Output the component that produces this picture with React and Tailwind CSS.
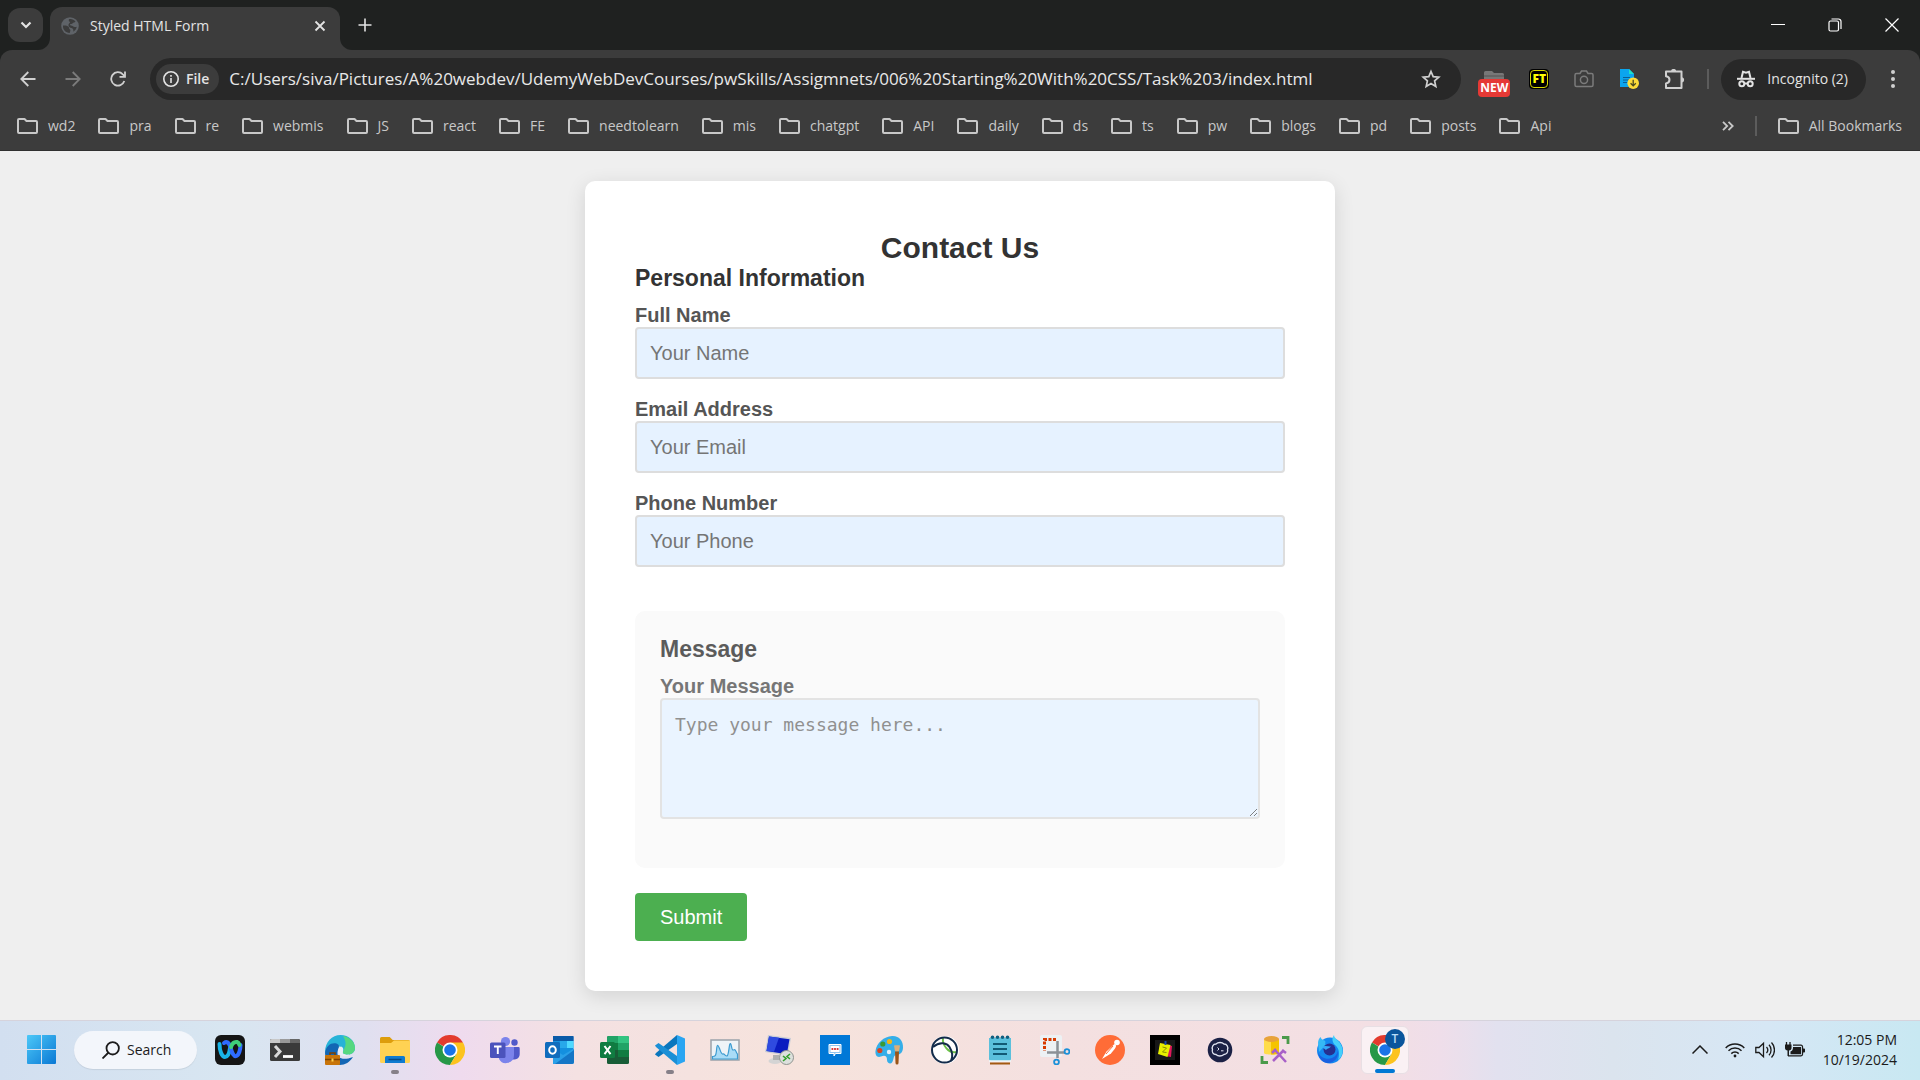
import React from "react";

const BOOKMARKS = [
  "wd2", "pra", "re", "webmis", "JS", "react", "FE", "needtolearn", "mis", "chatgpt",
  "API", "daily", "ds", "ts", "pw", "blogs", "pd", "posts", "Api",
];

function FolderIcon() {
  return (
    <svg viewBox="0 0 21 16" className="h-4 w-[21px] shrink-0" fill="none" stroke="currentColor" strokeWidth="2" strokeLinejoin="round">
      <path d="M1 14V2a1 1 0 0 1 1-1h5.500l2 2H19a1 1 0 0 1 1 1v10a1 1 0 0 1-1 1H2a1 1 0 0 1-1-1Z" />
    </svg>
  );
}

function TabStrip() {
  return (
    <div className="flex h-[50px] bg-[#1f2120] pl-2 text-[#e3e3e3]">
      <button aria-label="Search tabs" className="mt-2 grid h-[34px] w-[35px] shrink-0 place-items-center rounded-xl bg-[#3c3c3c]">
        <svg viewBox="0 0 12 8" className="h-2 w-3" fill="none" stroke="currentColor" strokeWidth="2.2">
          <path d="M1.500 1.500 6 6l4.500-4.500" />
        </svg>
      </button>
      <div className="relative mt-[7px] ml-[7px] flex w-[290px] items-center rounded-t-xl bg-[#3c3c3c] pr-3 pb-1.5 pl-[11px]">
        <span className="absolute bottom-0 -left-3 size-3 overflow-hidden">
          <span className="block size-3 rounded-br-xl shadow-[6px_6px_0_6px_#3c3c3c]" />
        </span>
        <span className="absolute -right-3 bottom-0 size-3 overflow-hidden">
          <span className="block size-3 rounded-bl-xl shadow-[-6px_6px_0_6px_#3c3c3c]" />
        </span>
        <svg viewBox="0 0 18 18" className="size-[18px]">
          <circle cx="9" cy="9" r="8.800" fill="#5f6368" />
          <path d="M2 8.500c2.500-.2 4.500.3 5.500 1.200 1 1 .3 2 1.500 2.800.8.500.3 2-.3 3.400C5 16 1.600 12.800 2 8.500Z" fill="#3c3c3c" />
          <path d="M8 2.200c2.500-.6 5 .5 6.500 2.300-.8 1.200-2.300.8-2.800 1.800-.5 1-2.500.2-2.700 1.400 0 1 1.800.8 2.600 1.300 1.200.7 2.300 1.400 4.200.8-.4 2.200-1.800 4-3.600 5 .4-1.600.2-2.800-1-3.600-1-.6-2.600-.5-3.400-1.800-.6-1.200-.4-2.600.8-3.300.6-.4.400-1.200-.2-1.600-.6-.4-.9-1.500-.4-2.300Z" fill="#3c3c3c" />
        </svg>
        <span className="ml-[11px] flex-1 text-sm">Styled HTML Form</span>
        <button aria-label="Close tab" className="grid size-4 place-items-center">
          <svg viewBox="0 0 12 12" className="size-3" stroke="currentColor" strokeWidth="1.800" fill="none">
            <path d="m1.500 1.500 9 9m0-9-9 9" />
          </svg>
        </button>
      </div>
      <button aria-label="New tab" className="ml-[18px] grid w-[14px] place-items-center">
        <svg viewBox="0 0 14 14" className="size-[14px]" stroke="currentColor" strokeWidth="1.600" fill="none">
          <path d="M7 .5v13M.5 7h13" />
        </svg>
      </button>
      <div className="ml-auto flex">
        <button aria-label="Minimize" className="grid w-[57px] place-items-center">
          <svg viewBox="0 0 14 14" className="size-[14px]" stroke="#fff" fill="none"><path d="M0 6.500h14" /></svg>
        </button>
        <button aria-label="Restore" className="grid w-[57px] place-items-center">
          <svg viewBox="0 0 14 14" className="size-[14px]" stroke="#fff" strokeWidth="1.200" fill="none">
            <rect x="1" y="3" width="9.500" height="10" rx="1.500" />
            <path d="M3.500 1h7a2.500 2.500 0 0 1 2.500 2.500V11" />
          </svg>
        </button>
        <button aria-label="Close" className="grid w-[57px] place-items-center">
          <svg viewBox="0 0 14 14" className="size-[14px]" stroke="#fff" strokeWidth="1.200" fill="none"><path d="m.5.5 13 13m0-13-13 13" /></svg>
        </button>
      </div>
    </div>
  );
}

function Toolbar() {
  return (
    <div className="bg-[#1f2120]">
      <div className="flex h-[58px] items-center rounded-t-xl bg-[#3c3c3c] pr-[25px] pl-5 text-[#d0d0d0]">
        <button aria-label="Back">
          <svg viewBox="0 0 16 16" className="size-4" fill="none" stroke="currentColor" strokeWidth="1.800"><path d="M15.500 8H1.500M8.300 1 1.300 8l7 7" /></svg>
        </button>
        <button aria-label="Forward" className="ml-[29px] text-[#7b7b7b]">
          <svg viewBox="0 0 16 16" className="size-4" fill="none" stroke="currentColor" strokeWidth="1.800"><path d="M.5 8h14M7.700 1l7 7-7 7" /></svg>
        </button>
        <button aria-label="Reload" className="ml-[29px]">
          <svg viewBox="0 0 16 16" className="size-4" fill="none" stroke="currentColor" strokeWidth="1.800"><path d="M14.300 10A6.700 6.700 0 1 1 12.800 3.300L14.500 5" /><path d="M15 .5v5.300H9.500" /></svg>
        </button>
        <div className="ml-6 flex h-[42px] flex-1 items-center rounded-full bg-[#282828] pr-5 pl-1.5">
          <button className="flex h-[30px] items-center gap-[7px] rounded-full bg-[#3c3c3c] pr-2.5 pl-[7px] text-sm font-semibold text-[#e3e3e3]">
            <svg viewBox="0 0 16 16" className="size-4" fill="none" stroke="currentColor" strokeWidth="1.600"><circle cx="8" cy="8" r="7.200" /><path d="M8 7v5M8 4v1.800" /></svg>
            File
          </button>
          <input
            aria-label="Address"
            readOnly
            className="ml-2.5 min-w-0 flex-1 bg-transparent text-[17px] text-[#e8e8e8] outline-none"
            value="C:/Users/siva/Pictures/A%20webdev/UdemyWebDevCourses/pwSkills/Assigmnets/006%20Starting%20With%20CSS/Task%203/index.html"
          />
          <button aria-label="Bookmark this tab">
            <svg viewBox="0 0 20 20" className="size-5" fill="none" stroke="currentColor" strokeWidth="1.700"><path d="m10 2.500 2.200 5.200 5.600.5-4.200 3.700 1.200 5.500-4.800-2.900-4.800 2.900 1.200-5.500-4.200-3.700 5.600-.5Z" /></svg>
          </button>
        </div>
        <button aria-label="Tab folders, new" className="ml-4 flex w-[34px] flex-col items-center pt-2.5">
          <svg viewBox="0 0 20 8" className="h-2 w-5" fill="#777"><path d="M0 8V1.500A1.500 1.500 0 0 1 1.500 0H8l2 2h8.500A1.500 1.500 0 0 1 20 3.500V8Z" /><path d="M0 5h20" stroke="#555" /></svg>
          <span className="h-[18px] rounded bg-[#e53935] px-0.5 text-xs leading-[18px] font-bold text-white">NEW</span>
        </button>
        <button aria-label="FT" className="ml-[18px] grid size-5 place-items-center rounded bg-black">
          <span className="grid size-[18px] place-items-center rounded-sm border border-[#d8d800] text-xs leading-none font-extrabold text-[#ffff00]">FT</span>
        </button>
        <button aria-label="Screenshot" className="ml-[25px] text-[#7b7b7b]">
          <svg viewBox="0 0 20 18" className="h-[18px] w-5" fill="none" stroke="currentColor" strokeWidth="1.500"><path d="M1 5a1.500 1.500 0 0 1 1.500-1.500H6L7.500 1h5L14 3.500h3.500A1.500 1.500 0 0 1 19 5v10a1.500 1.500 0 0 1-1.500 1.500h-15A1.500 1.500 0 0 1 1 15Z" /><circle cx="10" cy="9.800" r="3.600" /></svg>
        </button>
        <button aria-label="Save document" className="ml-[25px]">
          <svg viewBox="0 0 20 20" className="size-5"><path d="M1 0h9l5 5v13H1Z" fill="#0ba5ee" /><path d="M10 0v5h5Z" fill="#1de0c8" /><path d="M4 8.500h7M4 11h6M4 13.500h4" stroke="#0b5f96" strokeWidth="1.200" /><circle cx="14.200" cy="14.200" r="5.800" fill="#fddc3a" /><path d="M14.200 10.800v6m-2.600-2.500 2.600 2.600 2.600-2.600" stroke="#4b4a20" strokeWidth="1.300" fill="none" /></svg>
        </button>
        <button aria-label="Extensions" className="ml-[25px]">
          <svg viewBox="0 0 22 20" className="h-5 w-[22px]">
            <path d="M2 2.500h15.500V19H2v-4.600c2.300-.3 3.500-1.700 3.500-3.600S4.300 7.500 2 7.200Z" fill="none" stroke="currentColor" strokeWidth="2" strokeLinejoin="round" />
            <path d="M7 2.500a2.600 2.600 0 0 1 5.200 0ZM17.500 8.200a2.600 2.600 0 0 1 0 5.200Z" fill="currentColor" />
          </svg>
        </button>
        <span className="ml-[21px] h-5 w-0.5 bg-[#5c5c5c]" />
        <button className="ml-3 flex h-[41px] items-center gap-3 rounded-full bg-[#282828] pr-[18px] pl-4 text-sm text-[#e3e3e3]">
          <svg viewBox="0 0 18 18" className="size-[18px]" fill="none" stroke="currentColor" strokeWidth="2"><path d="M0 8.800h18" /><path d="M4.500 8 6 1.800 9 2.600l3-.8L13.500 8" /><circle cx="4.800" cy="13.800" r="2.500" /><circle cx="13.200" cy="13.800" r="2.500" /><path d="M7 13.500h4" /></svg>
          Incognito (2)
        </button>
        <button aria-label="Menu" className="ml-[25px]">
          <svg viewBox="0 0 4 18" className="h-[18px] w-1" fill="currentColor"><circle cx="2" cy="2" r="2" /><circle cx="2" cy="9" r="2" /><circle cx="2" cy="16" r="2" /></svg>
        </button>
      </div>
    </div>
  );
}

function BookmarksBar() {
  return (
    <nav aria-label="Bookmarks" className="flex h-[43px] items-center border-b border-[#303030] bg-[#3c3c3c] pr-[18px] pb-1.5 pl-[17px] text-sm text-[#c8c8c8]">
      <div className="flex gap-[23px]">
        {BOOKMARKS.map((name) => (
          <button key={name} className="flex items-center gap-2.5">
            <FolderIcon />
            {name}
          </button>
        ))}
      </div>
      <button aria-label="More bookmarks" className="ml-auto">
        <svg viewBox="0 0 12 10" className="h-2.5 w-3" fill="none" stroke="currentColor" strokeWidth="1.800"><path d="m1 .8 4.200 4.200L1 9.200M6.500.8 10.700 5 6.500 9.200" /></svg>
      </button>
      <span className="mx-[21px] h-5 w-0.5 bg-[#5c5c5c]" />
      <button className="flex items-center gap-2.5">
        <FolderIcon />
        All Bookmarks
      </button>
    </nav>
  );
}

function Field({ id, label, type, placeholder }) {
  return (
    <div>
      <label htmlFor={id} className="block font-bold text-[#555]">{label}</label>
      <input
        id={id}
        type={type}
        placeholder={placeholder}
        className="block h-[52px] w-full rounded border-2 border-[#ddd] bg-[#e6f2ff] px-[13px] placeholder:text-[#757575]"
      />
    </div>
  );
}

function ContactForm() {
  return (
    <form
      onSubmit={(e) => e.preventDefault()}
      className="w-full max-w-[750px] rounded-[10px] bg-white p-[50px] font-['Liberation_Sans',Arial,sans-serif] text-xl leading-[23px] shadow-[0_5px_20px_rgba(0,0,0,0.12)]"
    >
      <h2 className="text-center text-3xl leading-[34px] font-bold text-[#333]">Contact Us</h2>
      <h3 className="mb-3 text-[23px] leading-[27px] font-bold text-[#333]">Personal Information</h3>
      <div className="flex flex-col gap-[19px]">
        <Field id="name" label="Full Name" type="text" placeholder="Your Name" />
        <Field id="email" label="Email Address" type="email" placeholder="Your Email" />
        <Field id="phone" label="Phone Number" type="tel" placeholder="Your Phone" />
      </div>
      <section className="mt-11 rounded-[10px] bg-[#f9f9f9] px-[25px] pt-[25px] pb-[49px] opacity-80">
        <h3 className="mb-3 text-[23px] leading-[27px] font-bold text-[#333]">Message</h3>
        <label htmlFor="message" className="block font-bold text-[#555]">Your Message</label>
        <textarea
          id="message"
          placeholder="Type your message here..."
          className="block h-[121px] w-full resize rounded border-2 border-[#ddd] bg-[#e6f2ff] p-[13px] font-['DejaVu_Sans_Mono',monospace] text-lg leading-[23px] placeholder:text-[#757575]"
        />
      </section>
      <button type="submit" className="mt-[25px] block h-12 rounded bg-[#4caf50] px-[25px] text-white">Submit</button>
    </form>
  );
}

const APP_ICONS = {
  "Webex": (
    <>
      <rect width="30" height="30" rx="6" fill="#151515" />
      <g fill="none" strokeWidth="4" strokeLinecap="round">
        <path d="M4.500 9c0 7 2.500 13 5.500 13s4.500-5 5-9" stroke="#19b5e8" />
        <path d="M9 8c4-3 6 2 7 6s3 8 5.500 7 4-7 4-11" stroke="#2f6bff" />
        <path d="M16 12c1-3 3-5.500 6-5 1.500.5 2 1.500 2.500 3" stroke="#3fd07a" />
      </g>
    </>
  ),
  "Terminal": (
    <>
      <rect y="4" width="30" height="22" rx="1.500" fill="#3a3a3a" />
      <path d="M1.500 4H10v4H0V5.500A1.500 1.500 0 0 1 1.500 4Z" fill="#c8c8c8" />
      <path d="M10 4h10v4H10z" fill="#9a9a9a" />
      <path d="M20 4h8.500A1.500 1.500 0 0 1 30 5.500V8H20z" fill="#666" />
      <path d="m5 11 5 5.500L5 22" fill="none" stroke="#d8d8d8" strokeWidth="3" />
      <path d="M13 21.500h10" stroke="#fff" strokeWidth="2.800" />
    </>
  ),
  "Edge": (
    <>
      <path d="M0 17C0 7 7 0 15.500 0 24 0 30 6 30 13c0 4-3 6.500-7 6.500-3.500 0-5.500-1-5-2.500.8-2 0-5-4-5.500C7 11 3 14 2 19Z" fill="#27b3d8" />
      <path d="M18 1c7 1 12 6 12 12 0 4-3 6.500-7 6.500-3.500 0-5.500-1-5-2.500 1.500-5 5-8 0-16Z" fill="#55d880" />
      <path d="M0 18C1 10 7 7 11.500 8.500 16 10 13 14 12.500 17c-.8 6 5 9 15.500 5-3 5-8 8-13 8C6 30 0 25 0 18Z" fill="#1266b4" />
      <path d="M16 11.500c3.500 1.500 2 4 1.500 6 0 2 3 3 7 2-3 3-11 2-11.500-3 0-2.500 1-4.500 3-5Z" fill="#e8eef5" />
      <rect y="20" width="15" height="10" rx="1" fill="#c87408" />
      <path d="M5 20v-2h5v2M0 24.500h15" stroke="#7d4200" strokeWidth="1.500" fill="none" />
      <path d="M6.500 23.500h2v3h-2z" fill="#ffd04a" />
    </>
  ),
  "File Explorer": (
    <>
      <path d="M0 5V3.500A1.500 1.500 0 0 1 1.500 2h8.200l3 3H28.500A1.500 1.500 0 0 1 30 6.500V12H0Z" fill="#dd9d0c" />
      <path d="M0 8h11l3-2.500h16v21a1.500 1.500 0 0 1-1.500 1.500h-27A1.500 1.500 0 0 1 0 26.500Z" fill="#ffd253" />
      <path d="M5 28v-5.500A1.500 1.500 0 0 1 6.500 21h17a1.500 1.500 0 0 1 1.500 1.500V28Z" fill="#0f7bd0" />
      <path d="M8.500 24.500h13" stroke="#064a84" strokeWidth="1.500" />
    </>
  ),
  "Chrome": (
    <>
      <path d="M15 15 2 7.500A15 15 0 0 1 28 7.500Z" fill="#e33b2e" />
      <path d="M15 15h-1L2 7.500A15 15 0 0 0 15 30l6.500-11Z" fill="#279847" />
      <path d="M15 7.500h13A15 15 0 0 1 15 30l6.500-11Z" fill="#fcc31e" />
      <circle cx="15" cy="15" r="7.500" fill="#fff" />
      <circle cx="15" cy="15" r="5.800" fill="#1a73e8" />
    </>
  ),
  "Teams": (
    <>
      <circle cx="15.500" cy="6.500" r="4.600" fill="#7b83eb" />
      <circle cx="24.500" cy="7.500" r="3.200" fill="#5059c9" />
      <path d="M20 12h8.500a1.200 1.200 0 0 1 1.200 1.200V19a5.500 5.500 0 0 1-8 5Z" fill="#5059c9" />
      <path d="M9 12h15v8a8 8 0 0 1-15 4Z" fill="#7b83eb" />
      <rect y="7.500" width="15.500" height="15.500" rx="1.500" fill="#4b53bc" />
      <path d="M4 11.500h7.500M7.800 11.500V19" stroke="#fff" strokeWidth="1.900" />
    </>
  ),
  "Outlook": (
    <>
      <rect x="8" y="1" width="20.500" height="19" rx="1.500" fill="#1490df" />
      <path d="M8 1h20.500v5H8z" fill="#0a5ba8" />
      <path d="M15 6h7v7h-7z" fill="#28a8ea" />
      <path d="M22 6h6.500v7H22z" fill="#50d9ff" />
      <path d="M8 14l10 6 11-6.500V27a2 2 0 0 1-2 2H8Z" fill="#2aa0e8" />
      <path d="m10 29 19-14v12a2 2 0 0 1-2 2Z" fill="#1476c6" />
      <rect y="7" width="15" height="16" rx="1.500" fill="#0f6cbd" />
      <ellipse cx="7.500" cy="15" rx="3.300" ry="3.700" fill="none" stroke="#fff" strokeWidth="2" />
    </>
  ),
  "Excel": (
    <>
      <rect x="7" y="1" width="22" height="28" rx="1.500" fill="#185c37" />
      <path d="M8.500 1H18v9H7V2.500A1.500 1.500 0 0 1 8.500 1Z" fill="#21a366" />
      <path d="M18 1h9.500A1.500 1.500 0 0 1 29 2.500V8H18z" fill="#33c481" />
      <path d="M18 8h11v7H18z" fill="#21a366" />
      <path d="M7 8h11v7H7z" fill="#107c41" />
      <path d="M18 15h11v7H18z" fill="#107c41" />
      <rect y="7" width="15" height="16" rx="1.500" fill="#107c41" />
      <path d="m4.500 11 6 8.200m0-8.200-6 8.200" stroke="#fff" strokeWidth="2" />
    </>
  ),
  "Visual Studio Code": (
    <>
      <path d="M22 0v9L3.500 22 0 19.500 1 18Z" fill="#0a76bd" />
      <path d="M22 30v-9L3.500 8 0 10.500 1 12Z" fill="#1b8fd6" />
      <path d="M22 0 30 3.500v23L22 30Z" fill="#2aa5f2" />
    </>
  ),
  "Resource Monitor": (
    <>
      <rect x="1" y="5" width="28" height="20" fill="#eef3f7" stroke="#9aa3ab" strokeWidth="1.500" />
      <path d="M2.500 21.500c3 0 3.500-1 4-6 .5-7 1.500-6 3-2 1.500 4 2 6 3.500 5.500s2 2 4 2c2-1 2-13 3.500-12.500 1 .5 1 6.500 2.500 6.500s1.500-1 2.500.5 1 3 2 3.500v5h-25Z" fill="#a9dcf7" stroke="#3d9bd0" strokeWidth="1.200" />
    </>
  ),
  "Remote Desktop": (
    <>
      <ellipse cx="10" cy="26" rx="6.500" ry="3" fill="#d4d4d4" />
      <path d="M8 20h6l1 5H8Z" fill="#b0b0b0" />
      <path d="m3 0 23 3-3 18L0 17Z" fill="#c9cdd6" />
      <path d="m4 1.500 20.500 2.700-2.700 15L1.500 16Z" fill="#0a1cc0" />
      <path d="m4 1.500 10 1.300-5 14L1.500 16Z" fill="#2f4be0" />
      <circle cx="21.500" cy="22.500" r="7" fill="#dde0dd" stroke="#8f948f" />
      <path d="m18 21 3 2.500-3 2.500m7-7-3 2.500 3 2.500" stroke="#33a02c" strokeWidth="1.600" fill="none" />
    </>
  ),
  "Messaging": (
    <>
      <path d="M0 0h30v30H0z" fill="#0078d7" />
      <path d="M9 9.500h12v9h-5.500L14 21v-2.500H9Z" fill="#8fc4ee" stroke="#fff" strokeWidth="1" />
      <path d="M10.500 11h9v6h-9z" fill="#fff" />
      <path d="M11.500 14h7" stroke="#d83a3a" strokeWidth="2" strokeDasharray="1.800 .8" />
    </>
  ),
  "Paint": (
    <>
      <path d="M17 1c7-.5 11.500 5 11 12-.5 6-4 6.500-7 7-3 .6-2 5-4 7.500-1.500 2-5 .5-5-2.500 0-4-2-5-6-3.500S0 20 .5 16C1.500 8 9 1.500 17 1Z" fill="#35aee8" />
      <circle cx="4.800" cy="15.500" r="2.600" fill="#d84420" />
      <circle cx="7.800" cy="9" r="2.600" fill="#3a9a34" />
      <circle cx="14.500" cy="6.500" r="2.600" fill="#f0b518" />
      <circle cx="14" cy="17" r="2.200" fill="#e6f1f8" />
      <path d="M19 10.500c2-.5 4-.5 6 0l-1 6h-4Z" fill="#dcae78" />
      <path d="M20 16.500h4L23.500 28a1.500 1.500 0 0 1-3 0Z" fill="#9a5518" />
    </>
  ),
  "Cisco AnyConnect": (
    <>
      <circle cx="15" cy="15" r="14" fill="#fff" />
      <path d="M13 3c-1 7 6 16 13 14" fill="none" stroke="#6cc04a" strokeWidth="2" />
      <circle cx="14.500" cy="15" r="12.500" fill="none" stroke="#132b4a" strokeWidth="2" />
      <path d="M3 12C10 6 17 8 19.500 12s4 9 1.500 14" fill="none" stroke="#132b4a" strokeWidth="2" />
    </>
  ),
  "Notepad": (
    <>
      <path d="M5 28.500h20" stroke="#a35a12" strokeWidth="2" />
      <path d="M4 3h22v21a2 2 0 0 1-2 2H6a2 2 0 0 1-2-2Z" fill="#5bc0dc" />
      <path d="M4 26h22" stroke="#f2f8fa" strokeWidth="1.500" />
      <path d="M8 9h14M8 14h14M8 19h14" stroke="#125a75" strokeWidth="2" />
      <g fill="#0f5f80"><circle cx="7.500" cy="2.200" r="1.800" /><circle cx="12.500" cy="2.200" r="1.800" /><circle cx="17.500" cy="2.200" r="1.800" /><circle cx="22.500" cy="2.200" r="1.800" /></g>
    </>
  ),
  "Snipping Tool": (
    <>
      <rect width="22" height="22" rx="2" fill="#edf1f4" />
      <path d="M16 4.500H4.500V16" fill="none" stroke="#d83b01" strokeWidth="3" strokeDasharray="3 1.500" />
      <path d="M17.500 6v17M7 17.500h18" stroke="#8b9197" strokeWidth="2.500" />
      <circle cx="27" cy="16.500" r="2.400" fill="none" stroke="#1a90d8" strokeWidth="1.800" />
      <circle cx="16.500" cy="27" r="2.400" fill="none" stroke="#1a90d8" strokeWidth="1.800" />
    </>
  ),
  "Postman": (
    <>
      <circle cx="15" cy="15" r="15" fill="#ff6c37" />
      <circle cx="22" cy="7.500" r="2.800" fill="#fff" />
      <path d="M19.500 9c2 1 2 2 .5 4.500l-4 5L7 24l4.500-7.500Z" fill="#fff" />
      <path d="m11 19 7-8" stroke="#ff6c37" />
    </>
  ),
  "Sticky Notes": (
    <>
      <path d="M0 0h30v30H0z" fill="#000" />
      <path d="M5 5h20v20H5z" fill="#171717" />
      <path d="m13 9 9 2-1 11-6-1Z" fill="#e0185c" />
      <path d="m10 8 10.500 2-3 12L8 19Z" fill="#e8f000" />
      <path d="m12.500 12 4 1-4 4 4 .5" stroke="#8a9000" fill="none" />
      <path d="M15.500 6v4" stroke="#1a4aa8" strokeWidth="2" />
    </>
  ),
  "Termius": (
    <>
      <circle cx="15" cy="15" r="12.300" fill="#1b2145" />
      <path d="M11 9c2-2 6-2 8 0 3 0 4.500 3 3.500 5.500 1 2.500-1 5-3.500 5-2.500 2-6 2-8 0-3 0-4.500-2.500-3.500-5-1-2.500.5-5.500 3.500-5.500Z" fill="none" stroke="#dfe3f0" strokeWidth="1.300" />
      <path d="m12.500 12.500 1.500 1.500-1.500 1.500m3.500.3h2.500" stroke="#dfe3f0" fill="none" />
    </>
  ),
  "Database Tools": (
    <>
      <path d="M4 4v14c0 2 15 2 15 0V4Z" fill="#ffdc4a" />
      <path d="M11 4v15.500c4 0 8-.5 8-1.500V4Z" fill="#f5c400" />
      <ellipse cx="11.500" cy="4" rx="7.500" ry="3" fill="#e8a33a" />
      <path d="M22 2.500h6V9M2 21v6.500h6" fill="none" stroke="#4a9a4a" strokeWidth="2.800" />
      <path d="m13 26 11-11m-9 0 11 12m-14-9 4-4m6 1 4 3" stroke="#a860c8" strokeWidth="2.500" fill="none" />
    </>
  ),
  "Firefox": (
    <>
      <circle cx="15" cy="15.500" r="13" fill="#1488f0" />
      <path d="M3 8c0-3 1.500-5 2.500-6 .5 2 2 3 4 3.500 2 1 0 3 1 4.500L4 17Z" fill="#35b8f5" />
      <path d="M19 0c0 4 6 5 8 12 2 6-1 11-4 13 2-7 1-12-3-15-2-2-4-6-1-10Z" fill="#45d0fa" />
      <circle cx="14.500" cy="14.500" r="6" fill="#26308f" />
      <path d="M3 17c2 6 9 8 14 6 4-1.500 6-5 5-8 3 6-2 13-9 13-5 0-9-4-10-11Z" fill="#1a60e0" />
      <path d="M7 12c4-2 6 0 9-.5-2 2-4 2-5 3.500" fill="#35a8f8" />
    </>
  ),
};

function AppIcon({ name }) {
  return <svg viewBox="0 0 30 30" className="size-[30px]" aria-hidden="true">{APP_ICONS[name]}</svg>;
}

function Taskbar() {
  return (
    <footer className="flex h-[60px] items-center border-t border-[#d6d3dc] bg-[linear-gradient(90deg,#d2dff0_0%,#d8e6f1_12%,#e0e0f0_19%,#efdbee_24%,#f4e1e2_30%,#f6e3dc_42%,#f4e0e0_55%,#f3dfe4_72%,#efdeea_75%,#e2e1ef_78%,#dbe4ee_84%,#d6e7f5_92%,#c8e8f2_100%)] pr-[23px] pb-0.5 pl-[27px] text-[#1b1b1b]">
      <button aria-label="Start">
        <svg viewBox="0 0 29 29" className="size-[29px]">
          <defs>
            <linearGradient id="start" x1="0" y1="0" x2="1" y2="1" gradientUnits="objectBoundingBox">
              <stop offset="0" stopColor="#4cc8f8" />
              <stop offset="1" stopColor="#0a78d4" />
            </linearGradient>
          </defs>
          <path d="M1 0h13v14H0V1a1 1 0 0 1 1-1ZM15 0h13a1 1 0 0 1 1 1v13H15ZM0 15h14v14H1a1 1 0 0 1-1-1ZM15 15h14v13a1 1 0 0 1-1 1H15Z" fill="url(#start)" />
        </svg>
      </button>
      <button className="ml-[18px] flex h-[38px] w-[123px] items-center gap-[7px] rounded-full bg-[#f3f6fb] pl-7 text-sm shadow-[0_1px_1px_rgba(0,0,0,0.08)]">
        <svg viewBox="0 0 18 18" className="size-[18px]" fill="none" stroke="currentColor" strokeWidth="1.800"><circle cx="10.700" cy="7.300" r="6.200" /><path d="m6.500 11.500-6 6" /></svg>
        Search
      </button>
      <div className="ml-[18px] flex gap-[25px]">
        {Object.keys(APP_ICONS).map((name) => (
          <button key={name} aria-label={name} className="relative">
            <AppIcon name={name} />
            {(name === "File Explorer" || name === "Visual Studio Code") && (
              <span className="absolute -bottom-[9px] left-[11px] h-1 w-2 rounded-full bg-[#868088]" />
            )}
          </button>
        ))}
      </div>
      <button aria-label="Chrome, profile T" className="relative ml-4 grid h-12 w-12 place-items-center rounded-md border border-[#e8dfe4] bg-[#faf1f4]">
        <AppIcon name="Chrome" />
        <span className="absolute top-0.5 right-[3px] grid size-5 place-items-center rounded-full bg-[#0a559c] text-xs font-semibold text-[#b8dcf8]">T</span>
        <span className="absolute bottom-0 left-[13px] h-1 w-5 rounded-full bg-[#0078d4]" />
      </button>
      <div className="ml-auto flex items-center">
        <button aria-label="Show hidden icons">
          <svg viewBox="0 0 16 9" className="h-[9px] w-4" fill="none" stroke="currentColor" strokeWidth="1.500"><path d="m.5 8.500 7.500-7.500 7.500 7.500" /></svg>
        </button>
        <button aria-label="Network, volume and battery" className="ml-[17px] flex items-center gap-2.5">
          <svg viewBox="0 0 20 16" className="h-4 w-5" fill="none" stroke="currentColor" strokeWidth="1.500"><path d="M.7 6a13 13 0 0 1 18.600 0M3.500 8.800a9.200 9.200 0 0 1 13 0M6.300 11.600a5.200 5.200 0 0 1 7.400 0" /><circle cx="10" cy="14" r="1.400" fill="currentColor" stroke="none" /></svg>
          <svg viewBox="0 0 20 18" className="h-[18px] w-5" fill="none" stroke="currentColor" strokeWidth="1.300"><path d="M.8 6.500H4L8.500 2.200v13.600L4 11.500H.8ZM11.500 6a4.500 4.500 0 0 1 0 6M14 3.800a7.600 7.600 0 0 1 0 10.400M16.500 1.500a11 11 0 0 1 0 15" /></svg>
          <svg viewBox="0 0 20 16" className="h-4 w-5" fill="currentColor"><path d="M1.500 0v3M5 0v3" stroke="currentColor" strokeWidth="1.300" /><path d="M0 2.500h6.500V6c0 1.500-1 2.500-2.500 2.500V14H2.500V8.500C1 8.500 0 7.500 0 6Z" /><path d="M8 3.200h8A1.500 1.500 0 0 1 17.500 4.700v7.600a1.500 1.500 0 0 1-1.500 1.500H3" fill="none" stroke="currentColor" strokeWidth="1.300" /><path d="M8 5h8v7.200H5.500V9.500C7 9 8 7.500 8 6ZM18 6.500h1.200a.8.8 0 0 1 .8.800v2.400a.8.800 0 0 1-.8.800H18Z" /></svg>
        </button>
        <button className="ml-[18px] text-right text-sm leading-5">
          12:05 PM
          <br />
          10/19/2024
        </button>
      </div>
    </footer>
  );
}

export default function App() {
  return (
    <div className="flex min-h-screen flex-col font-['Open_Sans','Noto_Sans',sans-serif]">
      <header>
        <TabStrip />
        <Toolbar />
        <BookmarksBar />
      </header>
      <main className="flex flex-1 items-start justify-center bg-[#efefef] pt-[30px] pb-7">
        <ContactForm />
      </main>
      <Taskbar />
    </div>
  );
}
